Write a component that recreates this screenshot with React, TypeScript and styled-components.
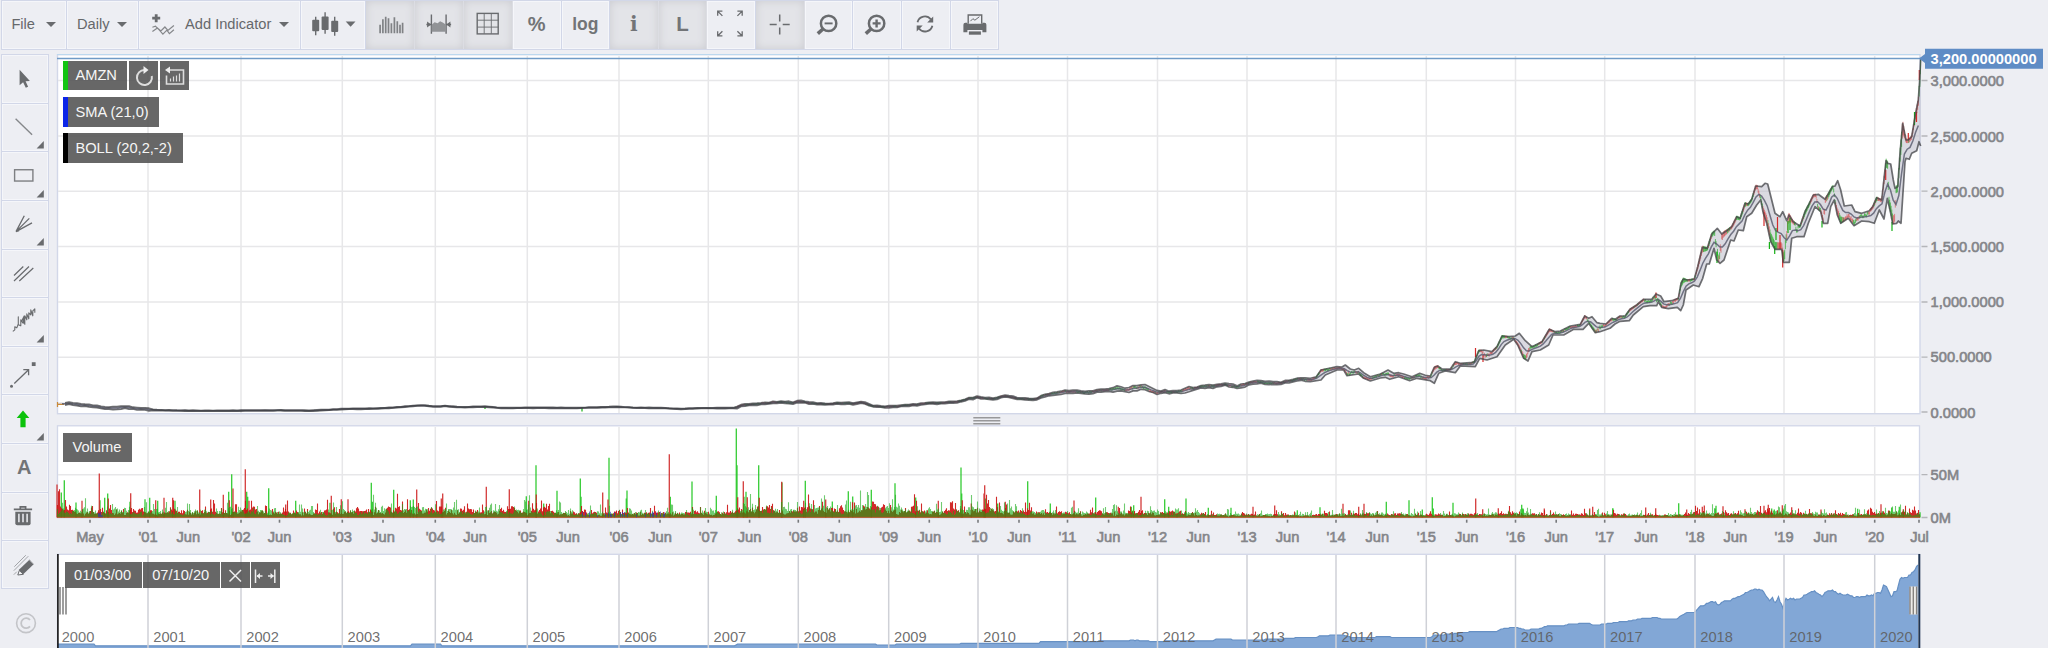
import React from "react";
import styled, { createGlobalStyle, css } from "styled-components";

const ink = "#696b6e";
const line = "#d2d7e8";

const Global = createGlobalStyle`
  * { box-sizing: border-box; }
  body { margin: 0; background: #edeef3; font-family: "Liberation Sans", Arial, sans-serif; font-size: 14.67px; color: #66686b; }
`;

/* ---------- layout ---------- */

const Page = styled.div`
  width: 2048px;
  height: 648px;
  overflow: hidden;
  display: flex;
  flex-direction: column;
  background: #edeef3;
`;
const Toolbar = styled.div`
  display: flex;
  height: 49.5px;
  margin: 0 0 4.5px 0.5px;
  width: 998.5px;
  border: 1px solid ${line};
  border-width: 1px 0 1.5px 1px;
`;
const ToolButton = styled.div<{ $w: number; $on?: boolean }>`
  width: ${(p) => p.$w}px;
  flex: none;
  height: 100%;
  padding-bottom: 1px;
  border-right: 1px solid ${line};
  box-shadow: inset 0 0 0 1px #f5f6fa;
  display: flex;
  align-items: center;
  ${(p) =>
    p.$on &&
    css`
      background: #e3e4e8;
      border-right-color: #dcdde3;
      box-shadow: inset 0 0 8px #cacbd0;
    `}
`;
const MenuLabel = styled.span<{ $x: number }>`
  padding-left: ${(p) => p.$x}px;
  white-space: nowrap;
`;
const Caret = styled.i<{ $gap: number }>`
  margin-left: ${(p) => p.$gap}px;
  border: 5px solid transparent;
  border-top-color: ${ink};
  border-bottom: 0;
`;
const Glyph = styled.span<{ $size: number; $serif?: boolean }>`
  flex: 1;
  text-align: center;
  font-weight: bold;
  font-size: ${(p) => p.$size}px;
  color: #727477;
  ${(p) => p.$serif && css`font-family: "DejaVu Serif", serif;`}
`;
const Icon = styled.svg`
  display: block;
  flex: none;
  overflow: visible;
  fill: none;
  stroke: ${ink};
  stroke-width: 1.4;
`;
const Body = styled.div`
  display: flex;
  flex: 1;
`;
const Sidebar = styled.div`
  width: 57px;
  padding-left: 0.5px;
  display: flex;
  flex-direction: column;
`;
const SideButton = styled.div`
  width: 48.5px;
  height: 48.63px;
  border: 1px solid ${line};
  border-bottom-width: 0;
  box-shadow: inset 0 0 0 1px #f5f6fa;
  display: flex;
  align-items: center;
  justify-content: center;
  padding-right: 1px;
  &:nth-child(11) { border-bottom-width: 1px; }
`;
const Charts = styled.div`
  flex: 1;
  display: flex;
  flex-direction: column;
  position: relative;
`;
const Panel = styled.div`
  position: relative;
  flex: none;
`;
const Plot = styled.svg`
  display: block;
  overflow: visible;
  font-family: "Liberation Sans", Arial, sans-serif;
  font-size: 14.67px;
`;
const Legends = styled.div<{ $top: number }>`
  position: absolute;
  left: 6px;
  top: ${(p) => p.$top}px;
  display: flex;
  flex-direction: column;
  gap: 6.8px;
`;
const LegendRow = styled.div`
  display: flex;
  gap: 1.5px;
`;
const Tag = styled.div<{ $w: number; $h?: number; $bar?: string; $pad?: number }>`
  width: ${(p) => p.$w}px;
  height: ${(p) => p.$h ?? 29.7}px;
  background: rgba(82, 82, 82, 0.88);
  color: #f6f6f6;
  display: flex;
  align-items: center;
  white-space: nowrap;
  padding-left: ${(p) => p.$pad ?? 7.4}px;
  ${(p) => p.$bar && css`border-left: 5px solid ${p.$bar};`}
`;
const RangeTags = styled.div`
  position: absolute;
  left: 8px;
  top: 9px;
  display: flex;
  gap: 1.5px;
`;

/* ---------- data ---------- */

type P = [number, number];
const X0 = 57;

function parse(s: string, ox: number, oy: number): P[] {
  return s.split(" ").map((t) => {
    const [a, b] = t.split(",").map(Number);
    return [ox + a / 3, oy + b / 3] as P;
  });
}
function at(points: P[], x: number) {
  if (x <= points[0][0]) return points[0][1];
  for (let i = 1; i < points.length; i++) {
    const [bx, by] = points[i];
    if (x <= bx) {
      const [ax, ay] = points[i - 1];
      return ay + ((by - ay) * (x - ax)) / (bx - ax || 1);
    }
  }
  return points[points.length - 1][1];
}
function seeded(seed: number) {
  let s = seed;
  return () => {
    s = (s * 1664525 + 1013904223) >>> 0;
    return s / 4294967296;
  };
}

const early: P[] = [
  [57, 404], [64, 403.6], [70, 403.4], [80, 404.6], [95, 406.3], [108, 408.3], [125, 407.3], [140, 408.6], [155, 410.2],
  [180, 410.6], [220, 410.8], [280, 410.3], [310, 410.8], [345, 409], [375, 408.6], [400, 407.2], [415, 405.6],
  [425, 405.6], [435, 406.6], [445, 406], [460, 407.3], [485, 406.6], [500, 408], [535, 407.8], [577, 408], [617, 406.8], [635, 407.8], [660, 408],
  [680, 408.9], [700, 408.2], [735, 408], [741, 406], [750, 404.4], [765, 403.8], [782, 401.5], [790, 402.8], [800, 401.8], [820, 404.2],
  [845, 403.3], [852, 404], [862, 402.6], [872, 405.8], [882, 407], [895, 406.3], [912, 405], [930, 403.2], [960, 402], [965, 399.5],
  [978, 397.3], [995, 398.7], [1005, 396.5], [1022, 398.8], [1037, 399], [1047, 394.8], [1067, 391.8], [1080, 392], [1088, 393],
  [1097, 391], [1109, 390], [1120, 388.4], [1127, 390], [1140, 386.8], [1147, 388], [1157, 392], [1174, 391.7], [1184, 391.3],
  [1189, 389.3], [1197, 387.7], [1212, 386.7], [1224, 384.3], [1239, 386.9], [1252, 382.3], [1267, 382.7], [1280, 383.3],
  [1297, 379.3], [1309, 380.2],
];
const band = (x: number) => (x < 150 ? 1.2 : x < 735 ? 0.4 : x < 1040 ? 0.9 : 1.4);
const wob = (x: number) => (x > 1110 && x < 1160 ? 1 : x > 1184 && x < 1192 ? 1.8 : 0);

const br = seeded(19);
const earlyUpper: P[] = [];
const earlyLower: P[] = [];
for (let x = 57; x < 1309; x += 4) {
  const y = at(early, x);
  const k = band(x) + wob(x);
  const drift = x > 735 ? (br() - 0.5) * 0.9 : 0;
  earlyUpper.push([x, y + drift - k * (0.6 + br() * 0.8)]);
  earlyLower.push([x, y + drift + k * (0.6 + br() * 0.8)]);
}

const upper: P[] = [
  ...earlyUpper,
  ...parse("640,265 658,260 672,240 700,234 720,230 735,231 745,225 760,237 772,240 785,235 800,248 820,260 850,252 862,246 873,240 890,250 905,248 920,252 945,260 968,250 985,256 1000,258 1012,232 1022,228 1035,237 1060,237 1075,215 1090,220 1120,218 1132,215 1145,182 1160,180 1185,185 1200,170 1215,138 1235,140 1255,138 1267,130 1285,152 1305,170 1335,155 1357,118 1375,125 1390,123 1420,108 1450,103 1463,78 1475,85 1485,80 1500,98", 1097, 290),
  ...parse("0,850 18,852 35,835 46,838 60,828 75,828 90,808 110,795 130,778 155,778 168,762 182,768 192,785 215,782 235,775 243,730 250,717 262,720 283,717 293,680 307,622 322,625 335,582 352,565 365,582 383,570 395,560 410,530 420,535 435,490 445,492 455,478 467,438 485,440 495,430 503,432 515,480 525,520 540,530 548,515 560,542 567,525 580,545 600,558 615,515 628,490 640,465 655,463 675,478 685,462 697,440 705,438 713,422 722,450 733,498 755,495 765,515 785,520 808,512 818,500 830,473 845,480 858,362 863,370 872,372 880,420 885,445 893,440 900,340 908,250 918,300 925,300 935,290 945,230 955,180 959,120 962,55", 1600, 40),
];
const lower: P[] = [
  ...earlyLower,
  ...parse("640,275 672,270 685,255 720,240 740,240 750,257 785,252 800,265 820,273 850,264 865,262 878,268 905,260 938,272 960,265 1000,272 1012,280 1025,250 1045,243 1075,248 1090,228 1135,230 1148,205 1170,210 1200,200 1225,165 1250,148 1262,165 1280,205 1293,213 1305,185 1330,180 1355,165 1368,135 1400,135 1430,118 1458,118 1475,100 1495,128", 1097, 290),
  ...parse("0,875 30,865 45,852 60,844 88,842 100,825 130,800 150,797 170,797 175,785 185,802 205,806 232,802 242,812 250,795 258,750 280,735 297,740 308,715 320,672 328,672 342,625 350,660 360,670 372,660 392,600 402,603 415,570 430,572 440,530 455,520 470,495 482,480 490,520 500,550 512,605 525,628 545,628 550,667 568,667 575,595 590,590 612,590 625,550 645,500 662,515 670,550 683,550 692,500 703,480 712,525 722,550 745,535 762,557 785,543 808,545 823,550 838,510 852,537 862,475 872,520 878,552 890,550 895,543 903,550 915,365 918,355 928,358 935,340 950,332 957,305 962,318", 1600, 40),
];

const xs: number[] = [];
for (let x = 62; x <= 1920.6; x += 0.7) xs.push(x);
const toPath = (pts: P[]) => "M" + pts.map(([x, y]) => `${x.toFixed(1)},${y.toFixed(1)}`).join("L");
const upPath = toPath(upper.slice(2));
const loPath = toPath(lower.slice(2));
const bandFill = toPath([...upper, ...[...lower].reverse()]) + "Z";
const smaPath = toPath(
  xs.filter((_, i) => i % 4 === 0).map((x) => {
    let m = 0;
    for (let k = -2; k <= 2; k++) m += at(upper, Math.min(1918, x + k)) + at(lower, Math.min(1918, x + k));
    return [x, m / 10] as P;
  })
);

const rnd = seeded(41);
let greenCandles = "";
let redCandles = "";
for (const x of xs) {
  if (x < 735) continue;
  const u = at(upper, x);
  const l = at(lower, x);
  const slope = at(upper, x + 5) + at(lower, x + 5) - at(upper, x - 5) - at(lower, x - 5);
  const pos = Math.max(0.05, Math.min(0.9, 0.48 + slope / 26 + (rnd() - 0.5) * 0.3));
  const h = 0.5 + (l - u) * 0.09;
  const y = u + (l - u) * pos;
  const seg = `M${x.toFixed(1)},${(y - h).toFixed(1)}V${(y + h).toFixed(1)}`;
  const bullish = Math.sin(x * 0.55) + Math.sin(x * 0.21) + (rnd() - 0.5) * 1.6 > 0;
  if (bullish) greenCandles += seg;
  else redCandles += seg;
}
const wicks: [number, number, number, number][] = [
  [1475.5, 348, 357, 0], [1483, 355, 362, 0], [1656, 292.6, 298, 0], [1782.7, 250, 267.5, 0], [1769.4, 242, 249, 1],
  [1774.7, 246, 254, 1], [1764, 212, 226, 0], [1777.5, 217, 232, 0], [1822, 221, 227.5, 1], [1892, 222, 231, 1],
  [1717, 252, 263, 1], [1908.3, 133, 140, 0], [1914.5, 112, 125, 1], [1916.5, 112, 122, 0], [1885.7, 170, 180, 0],
  [1919.3, 70, 80, 0], [485, 407, 409, 1], [582, 408, 411.5, 1], [1788, 221, 233, 1], [1790, 218, 230, 1], [1776, 228, 240, 1], [1780, 235, 249, 0],
];

const years = [148, 241, 342.3, 435.3, 527.3, 619, 708.3, 798.3, 888.7, 978, 1067.5, 1157.5, 1247, 1336, 1426.3, 1515.5, 1604.7, 1695, 1784, 1874.7];
const junes = [188.3, 279.5, 383, 475, 568, 660, 749.6, 839.3, 929.3, 1019, 1108.6, 1198.3, 1287.5, 1377.3, 1466.7, 1556.2, 1646, 1735.3, 1825.3];
const pad = (n: number) => String(n).padStart(2, "0");

const spikeRows: [number, number, string][] = [
  [57, 397, "r0:298 g13:322 g22:285 g57:352 r75:347 r127:265 g129:345 g143:338 g152:325 r154:340 r221:324 g219:350 g264:342 g278:338 g302:347 r296:345 r321:338 r347:338 g354:347 r428:313 r461:343 r499:329 g515:320 g524:267 r528:310 r517:345 r565:252 g569:320 r576:347 g572:335 g635:309 g716:347 r686:358 r823:332 g819:353 r853:342 r873:342 g943:293 g1010:314 g946:350 r1079:313 g1060:345 g1069:343 r1157:325 r1153:340 r1288:305 r1357:312 g1408:333 r1415:347 g1437:240 r1438:328 g1500:317 g1460:355"],
  [577, 397, "g10:280 g12:335 r77:322 g96:218 r93:343 g150:316 g148:340 r277:207 g280:335 g345:289 g418:332 g478:130 g480:240 r482:336 r499:288 g501:335 g507:320 r511:336 g545:240 r547:338 r614:290 g615:292 g685:287 r680:347 r746:343 g766:349 g814:318 g827:334 g883:314 g954:294 g1016:337 r1084:347 g1152:247 g1154:325 r1156:345 r1183:355 r1223:300 r1221:325 g1225:340 g1262:355 r1285:350 g1352:288 g1420:355 r1491:346 g1556:337"],
  [1097, 682, "r64:650 g110:645 g103:650 r132:620 g203:627 g267:625 g215:650 g240:658 g334:653 g402:653 r468:650 r533:646 g601:660 g669:651 r738:641 r785:650 r801:641 g868:635 g936:630 g1006:621 g1009:655 g976:658 g1068:638 r1136:625 r1157:657 r1204:654 g1274:644 g1278:655 r1342:655 r1478:655 r1487:650 g1548:655"],
  [1600, 352, "g38:324 r137:322 r167:324 g236:309 r260:328 r307:320 r313:316 g348:317 g346:325 r369:318 r435:327 r492:317 r505:314 g515:325 g523:328 r547:315 g549:325 r575:321 r663:328 g773:326 r843:312 g875:322 g898:320 r910:327 g960:336"],
];
const baseVol: P[] = [
  [57, 8], [80, 5.5], [130, 5.5], [190, 4.6], [230, 5.5], [245, 7], [262, 5], [300, 4.6], [340, 5], [380, 6.5], [430, 7],
  [470, 5.5], [530, 6.5], [570, 4], [620, 4], [660, 4.2], [735, 4.5], [745, 9], [780, 5.5], [810, 8], [850, 6.5],
  [868, 10.5], [890, 8], [925, 5.5], [965, 5.5], [985, 8], [1030, 4.5], [1090, 3.8], [1130, 4.5], [1180, 4], [1210, 2.6],
  [1320, 2.2], [1350, 3], [1430, 2.4], [1480, 2.5], [1515, 3.8], [1545, 2.5], [1680, 2.2], [1700, 4], [1730, 2.8], [1770, 5], [1800, 3.3],
  [1850, 2.4], [1885, 4], [1900, 4.5], [1919, 4],
];
const vr = seeded(7);
const V0 = 517.5;
let greenVol = "";
let redVol = "";
let blueVol = "";
for (let x = X0 + 0.5; x < 1920; x += 1) {
  const b = at(baseVol, x) * 1.22;
  const bias = Math.sin(x * 0.17) * 0.5 + Math.sin(x * 0.61) * 0.4;
  const jump = (p: number) => (vr() < p ? 1.5 + vr() * 0.9 : 0.6 + vr() * 0.65);
  redVol += `M${x},${V0}V${(V0 - b * jump(0.12) * (0.9 - bias * 0.5)).toFixed(1)}`;
  greenVol += `M${x},${V0}V${(V0 - b * jump(0.14) * (0.9 + bias * 0.5)).toFixed(1)}`;
  if ((x > 580 && x < 665 && vr() < 0.25) || (x > 98 && x < 103)) blueVol += `M${x},${V0}V${(V0 - 2 - vr() * 4).toFixed(1)}`;
}
let greenSpikes = "";
let redSpikes = "";
for (const [ox, base, row] of spikeRows)
  for (const item of row.split(" ")) {
    const [px, top] = item.slice(1).split(":").map(Number);
    const seg = `M${(ox + px / 3).toFixed(1)},${V0}V${(V0 - (base - top) / 3).toFixed(1)}`;
    if (item[0] === "g") greenSpikes += seg;
    else redSpikes += seg;
  }

const navPoints: P[] = [
  [57, 644], [94, 644], [95, 645.5], [411, 645.5], [412, 644.3], [441, 644.3], [442, 645.5], [480, 645.5], [735, 645.5], [737, 644.3], [875, 644.3],
  [877, 645.4], [895, 645.4], [897, 644.3], [960, 644.3], [962, 643], [1039, 643], [1041, 641.7], [1087, 641.7],
  ...parse("0,1055 8,1053 95,1053 97,1050 112,1050 114,1053 125,1048 127,1052 155,1052 157,1056 200,1056 202,1053 348,1053 350,1049 400,1047 410,1050 440,1050 540,1048 600,1043 660,1042 665,1038 700,1036 740,1036 760,1042 860,1041 940,1042 1003,1043 1010,1035 1060,1033 1075,1030 1130,1025 1200,1024 1220,1015 1260,1012 1285,1020 1330,1016 1350,1008 1400,1008 1412,1003 1450,1001 1475,1000 1490,1005", 1097, 290),
  ...parse("0,674 50,667 90,663 130,655 170,653 185,657 232,657 240,648 260,638 283,637 300,620 330,606 345,606 355,615 370,603 385,604 410,592 430,582 450,575 465,567 487,570 500,590 510,605 515,590 525,610 535,592 550,625 555,597 600,598 615,585 645,572 665,590 675,578 697,568 710,582 740,582 765,592 820,586 830,577 842,580 850,556 857,554 865,575 875,595 883,575 893,570 898,535 925,530 935,520 945,510 957,490", 1600, 400),
];
const jr = seeded(3);
const navLine: P[] = [];
for (let x = 58; x <= 1919; x += 1.5) {
  const y = at(navPoints, x) + (x > 1700 ? (jr() - 0.5) * 1.6 : 0);
  navLine.push([x, Math.round(y * 1.2) / 1.2]);
}

/* ---------- toolbar and sidebar icons ---------- */

const TIcon = ({ x, w = 49, children }: { x: number; w?: number; children: React.ReactNode }) => (
  <Icon width={w - 1} height={46} viewBox={`${x + 0.6} 1.3 ${w - 1} 46`}>{children}</Icon>
);
const SIcon = ({ n, more, children }: { n: number; more?: boolean; children: React.ReactNode }) => {
  const y = 55 + n * 48.63;
  return (
    <Icon width={46} height={47} viewBox={`1.7 ${y} 46 47`}>
      {children}
      {more && <path d={`M37.3 ${y + 44.6}h7.2v-7.5z`} fill={ink} stroke="none" />}
    </Icon>
  );
};
const Magnifier = ({ cx, plus }: { cx: number; plus?: boolean }) => (
  <>
    <circle cx={cx} cy={23.7} r={7.7} strokeWidth={2.5} />
    <path d={`M${cx - 5.6} 29.3l-5.2 4.6`} strokeWidth={3.6} />
    <path d={`M${cx - 4} 23.7h8${plus ? `M${cx} 19.7v8` : ""}`} strokeWidth={plus ? 2.4 : 1.9} />
  </>
);

const tick = (x: number) => <path key={x} d={`M${x} 519.7v3`} stroke="#77797c" strokeWidth={1.6} />;
const axisText = { fill: "#848589", stroke: "#848589", strokeWidth: 0.6 };

export default function App() {
  return (
    <Page>
      <Global />
      <Toolbar>
        <ToolButton $w={65.5}><MenuLabel $x={9.9}>File</MenuLabel><Caret $gap={10.5} /></ToolButton>
        <ToolButton $w={72}><MenuLabel $x={10}>Daily</MenuLabel><Caret $gap={7.5} /></ToolButton>
        <ToolButton $w={162}>
          <TIcon x={139} w={47}>
            <path d="M156.8 14.5v8M152.8 18.5h8" strokeWidth={2.8} />
            <path d="M153 31.8l5-3.5 3.500 3 4-4 3 3.500 6-5M153 27.500l3-1 4 4 3.500 4 4-4 2.500 3.500 4.500-4" stroke="#85878a" strokeWidth={1.2} />
          </TIcon>
          <MenuLabel $x={0}>Add Indicator</MenuLabel><Caret $gap={7.5} />
        </ToolButton>
        <ToolButton $w={65}>
          <TIcon x={301} w={65}>
            <g fill={ink} stroke="none"><rect x="312.8" y="20" width="7" height="11.6" rx="1" /><rect x="322.2" y="16.7" width="7" height="13.6" rx="1" /><rect x="331.8" y="21" width="7" height="11.2" rx="1" /><path d="M346.3 21.8h9.8l-4.9 5.2z" /></g>
            <path d="M316.3 17v18.600M325.7 12.500v21.500M335.3 17v19" />
          </TIcon>
        </ToolButton>
        <ToolButton $w={49} $on>
          <TIcon x={366}><path stroke="#808285" strokeWidth={1.700} d="M380.7 25v8.500M383.5 19.500v14M386.3 17v16.500M389.1 18.500v15M392 23.500v10M395 17.500v16M397.9 21.500v12M400.6 25v8.500M403.2 23v10.500" /></TIcon>
        </ToolButton>
        <ToolButton $w={49} $on>
          <TIcon x={415.3}>
            <path d="M432.3 14.800V34M447 14.800V34" />
            <path d="M432.5 32V25l3-2.500 3 1 2.500-2 3 1.500 3 2V32z" fill="#919396" stroke="none" />
            <path d="M427.3 24.800h5M447 24.800h5" />
            <path d="M432 24.800l-4-3v6zM447.3 24.800l4-3v6z" fill={ink} stroke="none" />
          </TIcon>
        </ToolButton>
        <ToolButton $w={49} $on>
          <TIcon x={464}><rect x="477.8" y="13.7" width="21" height="20.5" /><path strokeWidth=".9" d="M484.8 14v20M491.9 14v20M478 20.500h21M478 27.400h21" /></TIcon>
        </ToolButton>
        <ToolButton $w={48.5}><Glyph $size={20}>%</Glyph></ToolButton>
        <ToolButton $w={48.5}><Glyph $size={17.5}>log</Glyph></ToolButton>
        <ToolButton $w={48.7} $on><Glyph $size={20} $serif>i</Glyph></ToolButton>
        <ToolButton $w={48.7} $on><Glyph $size={20.5}>L</Glyph></ToolButton>
        <ToolButton $w={48.5}>
          <TIcon x={706.5}><path strokeWidth={1.3} d="M717.8 16v-4.500h4.700M718 11.700l4.500 4.500M737.5 11.500h4.800v4.500M742 11.700l-4.500 4.500M717.8 31.500v4.700h4.700M718 36l4.500-4.500M742.3 31.500v4.700h-4.800M742 36l-4.500-4.500" /></TIcon>
        </ToolButton>
        <ToolButton $w={49} $on>
          <TIcon x={755}><path strokeWidth={1.5} d="M779.3 14.700v7M779.3 27.700v7M769.3 24.700h7M782.3 24.700h7" /></TIcon>
        </ToolButton>
        <ToolButton $w={48.5}><TIcon x={804.5}><Magnifier cx={828.7} /></TIcon></ToolButton>
        <ToolButton $w={48.7}><TIcon x={853}><Magnifier cx={877.2} plus /></TIcon></ToolButton>
        <ToolButton $w={48.5}>
          <TIcon x={901.5}>
            <path strokeWidth={1.8} d="M917.6 22.500a7.600 7.600 0 0 1 13.400-2.800M932.5 26a7.600 7.600 0 0 1-13.400 2.800" />
            <path d="M933.3 16.800v6h-6zM916.8 31.700v-6h6z" fill={ink} stroke="none" />
          </TIcon>
        </ToolButton>
        <ToolButton $w={48.9}>
          <TIcon x={950}>
            <path d="M967.8 24v-8.700h13.500V24" /><path d="M970 21.500l2.500-2.500 2 1.500 4.500-3.500" strokeWidth={1} />
            <path d="M965 23h2v1h15v-1h2q2 0 2 2v7.500h-4v-2.300h-15v2.300h-4V25q0-2 2-2z" fill={ink} stroke="none" />
            <path d="M968.5 31.700h12v3.300h-12z" fill={ink} stroke="none" />
          </TIcon>
        </ToolButton>
      </Toolbar>
      <Body>
        <Sidebar>
          <SideButton><SIcon n={0}><path d="M20.3 69.800v15.400l3.500-3 2.700 5.600 2.300-1-2.500-5.500 4.300-.3z" fill={ink} stroke="none" /></SIcon></SideButton>
          <SideButton><SIcon n={1} more><path stroke="#85878a" d="M16.3 118.500l16.500 16" /></SIcon></SideButton>
          <SideButton><SIcon n={2} more><rect x="15.3" y="169" width="18.3" height="11.3" stroke="#7d7f82" /></SIcon></SideButton>
          <SideButton><SIcon n={3} more><path strokeWidth={1.3} d="M16.7 231.500L25 215.700M16.7 231.500L30 218.300M16.7 231.500L32.7 222.700M16.7 231.500l3-1" /></SIcon></SideButton>
          <SideButton><SIcon n={4}><path strokeWidth={1.2} d="M14.7 275l9.300-9M14.7 280.500l15-14.500M20 280.500l14-13" /></SIcon></SideButton>
          <SideButton><SIcon n={5} more><path strokeWidth={1.1} strokeLinejoin="round" d="M13.5 331.500l2-1.500v-3l2 1 1.500-4v-7v8l2.500 1v-6l2 3 1-5v6M25.5 325v-9l2 4v-6l2 5v-6l2 2v-5l2 6v-5l2-2v4M22 322l3-6" /></SIcon></SideButton>
          <SideButton>
            <SIcon n={6}><path strokeWidth={1.3} d="M15 383.300l14-13.500M24 369.500h5.300v5.500" /><g fill={ink} stroke="none"><circle cx="12.2" cy="386" r="1.5" /><rect x="32.5" y="362" width="3.8" height="3.8" /></g></SIcon>
          </SideButton>
          <SideButton><SIcon n={7} more><path d="M23.7 409.800l6.300 7.500h-3.700v9.300h-5.200v-9.300h-3.700z" fill="#0bc20b" stroke="none" /></SIcon></SideButton>
          <SideButton><Glyph $size={20}>A</Glyph></SideButton>
          <SideButton>
            <SIcon n={9}>
              <path d="M14.5 509h18.300M21 508.500v-2h5.300v2" strokeWidth={1.7} />
              <path d="M16 511.500h15.300v11.500q0 2-2 2h-11.300q-2 0-2-2z" fill={ink} stroke="none" />
              <path d="M19.6 513.500v8.500M23.7 513.500v8.500M27.8 513.500v8.500" stroke="#edeef3" strokeWidth={1.5} />
            </SIcon>
          </SideButton>
          <SideButton>
            <SIcon n={10}>
              <path d="M21.5 572.500l11-10.500" strokeWidth={6.2} />
              <path d="M18.5 575.300l1.500-4.500 4 3.800z" fill="#f8f8fa" strokeWidth={1} />
              <path d="M15 567l11.500-11.500M14.5 571l14.500-14.500M14.5 575l3-3" stroke="#a3a5a9" strokeWidth={1} />
              <path d="M30.5 560.500l4 4" stroke="#edeef3" strokeWidth={0.9} />
            </SIcon>
          </SideButton>
          <Icon width={49} height={54} viewBox="0 589 49 54">
            <circle cx="25" cy="623.2" r="9.4" stroke="#c3c4c8" strokeWidth={1.6} />
            <path d="M29 620a5 5 0 1 0 0 6.400" stroke="#c3c4c8" strokeWidth={1.8} />
          </Icon>
        </Sidebar>
        <Charts>
          <Panel>
            <Plot width={1991} height={361} viewBox="57 54 1991 361">
              <rect x="57.5" y="54.7" width="1862.5" height="359" fill="#fff" stroke={line} strokeWidth={1.4} />
              <path d="M57 54.500H1920" stroke="#bcd8ee" strokeWidth={1.2} />
              <path stroke="#e7e7e9" strokeWidth={1.5} d={years.map((x) => `M${x} 56V413`).join("") + [80.5, 136, 191.2, 246.5, 302, 357.2].map((y) => `M58 ${y}H1919`).join("")} />
              <path d={bandFill} fill="#bcbcc8" fillOpacity={0.55} />
              <path d={greenCandles} stroke="#22a822" strokeWidth={1} strokeOpacity={0.65} />
              <path d={redCandles} stroke="#d23a3a" strokeWidth={1} strokeOpacity={0.55} />
              {wicks.map(([x, a, b, g]) => <path key={x} d={`M${x} ${a}V${b}`} stroke={g ? "#16b016" : "#d32a2a"} strokeWidth={1.2} />)}
              <path d="M57.5 402v5M58 404.300h6" stroke="#c98a3a" strokeWidth={1.2} />
              <path d={smaPath} fill="none" stroke="#55586c" strokeWidth={1.5} strokeOpacity={0.8} />
              <path d={upPath} fill="none" stroke="#404246" strokeWidth={1.7} strokeOpacity={0.75} strokeLinejoin="round" />
              <path d={loPath} fill="none" stroke="#404246" strokeWidth={1.7} strokeOpacity={0.75} strokeLinejoin="round" />
              <path d="M57 58.600H1921" stroke="#6f9ac6" strokeWidth={1.5} />
              <path stroke="#b4b5b9" strokeWidth={1.3} d={[80.5, 136, 191.2, 246.5, 302, 357.2, 412].map((y) => `M1921.5 ${y}h6`).join("")} />
              {["3,000", "2,500", "2,000", "1,500", "1,000", "500", "0"].map((t, i) => (
                <text key={t} x={1930.6} y={86.4 + i * 55.2} {...axisText}>{t}.0000</text>
              ))}
              <path d="M1919 58.600l6-4.500v-5.300h118v19.900h-118v-5.600z" fill="#5f8cc5" />
              <text x={1930.6} y={63.9} fill="#fff" fontWeight="bold">3,200.00000000</text>
            </Plot>
            <Legends $top={6.5}>
              <LegendRow>
                <Tag $w={64} $bar="#12c412">AMZN</Tag>
                <Tag $w={29.7} $pad={0}>
                  <Icon width={29.7} height={29.7} viewBox="129 60.5 29.7 29.7"><path d="M144.5 69.500a7.500 7.500 0 1 0 7.300 6" stroke="#ddd" strokeWidth={2} /><path d="M143.5 65.500l5 4-5 4z" fill="#eee" stroke="none" /></Icon>
                </Tag>
                <Tag $w={29} $pad={0}>
                  <Icon width={29} height={29.7} viewBox="160 60.5 29 29.7"><path d="M166.5 75v8.500h17V69.500h-15" stroke="#ddd" strokeWidth={1.6} /><path d="M165 69.500l5-3.500v7z" fill="#eee" stroke="none" /><path d="M170.5 81v-3M173.5 81v-5M176.5 81v-6M179.5 81v-8" stroke="#ddd" strokeWidth={1.2} /></Icon>
                </Tag>
              </LegendRow>
              <Tag $w={96.2} $bar="#0b25e8">SMA (21,0)</Tag>
              <Tag $w={119.6} $bar="#000">BOLL (20,2,-2)</Tag>
            </Legends>
          </Panel>
          <Panel>
            <Plot width={1991} height={10} viewBox="57 415 1991 10">
              <path d="M973.3 417.800h27M973.3 420.800h27M973.3 423.800h27" stroke="#98989a" strokeWidth={1.5} />
            </Plot>
          </Panel>
          <Panel>
            <Plot width={1991} height={128} viewBox="57 425 1991 128">
              <rect x="57.5" y="425.8" width="1862" height="92" fill="#fff" stroke={line} strokeWidth={1.3} />
              <path stroke="#e7e7e9" strokeWidth={1.5} d={years.map((x) => `M${x} 427V517`).join("") + "M58 474.700H1919"} />
              <path d={greenSpikes} stroke="#1fc71f" strokeWidth={1.3} strokeOpacity={0.9} />
              <path d={redSpikes} stroke="#cf2626" strokeWidth={1.3} strokeOpacity={0.9} />
              <path d={redVol} stroke="#cc1212" strokeWidth={1.1} strokeOpacity={0.9} />
              <path d={greenVol} stroke="#12a812" strokeWidth={1.1} strokeOpacity={0.6} />
              <path d={blueVol} stroke="#2d2dbb" strokeWidth={1} strokeOpacity={0.6} />
              <path d="M57 517.300H1920" stroke="#c44a1c" strokeWidth={1} strokeOpacity={0.7} />
              <path stroke="#b4b5b9" strokeWidth={1.3} d="M1921.5 474.700h6M1921.5 517.500h6" />
              <text x={1930.6} y={479.6} {...axisText}>50M</text>
              <text x={1930.6} y={522.8} {...axisText}>0M</text>
              {[90, ...years, ...junes, 1919].map(tick)}
              <g textAnchor="middle" {...axisText}>
                <text x={90} y={541.6}>May</text>
                {years.map((x, i) => <text key={x} x={x} y={541.6}>'{pad(i + 1)}</text>)}
                {junes.map((x) => <text key={x} x={x} y={541.6}>Jun</text>)}
                <text x={1919.5} y={541.6}>Jul</text>
              </g>
            </Plot>
            <Legends $top={7.5}><Tag $w={68.7} $pad={9.5}>Volume</Tag></Legends>
          </Panel>
          <Panel>
            <Plot width={1991} height={95} viewBox="57 553 1991 95">
              <rect x="57.5" y="554.3" width="1862" height="100" fill="#fff" stroke={line} strokeWidth={1.3} />
              <path d={toPath(navLine) + "V648H58Z"} fill="#82a7d6" />
              <path d={toPath(navLine)} fill="none" stroke="#6690c4" strokeWidth={1.2} />
              <path stroke="#cfd1d7" strokeWidth={1.5} d={years.map((x) => `M${x} 555V648`).join("")} />
              <text x={61.7} y={641.8} fill="#666" fillOpacity={0.9}>2000</text>
              {years.map((x, i) => <text key={x} x={x + 5.3} y={641.8} fill="#5e5e60" fillOpacity={0.9}>{2001 + i}</text>)}
              <path d="M57.9 554V648" stroke="#111" strokeWidth={1.6} />
              <path d="M1919.3 554V648" stroke="#203552" strokeWidth={2} />
              <path d="M60 587v27.500M63 587v27.500M66 587v27.500" stroke="#858585" strokeWidth={1.6} />
              <rect x="1909.5" y="586.5" width="8" height="28" fill="#eeece8" />
              <path d="M1910 586.500v28M1913.3 586.500v28M1916.6 586.500v28" stroke="#85827f" strokeWidth={1.4} />
            </Plot>
            <RangeTags>
              <Tag $w={76.7} $h={25.6} $pad={9}>01/03/00</Tag>
              <Tag $w={76.5} $h={25.6} $pad={9}>07/10/20</Tag>
              <Tag $w={28.5} $h={25.6} $pad={0}>
                <Icon width={28.5} height={25.6} viewBox="0 0 28.5 25.6"><path d="M8.500 8l11.500 11.500M20 8L8.500 19.500" stroke="#eee" strokeWidth={1.5} /></Icon>
              </Tag>
              <Tag $w={28.5} $h={25.6} $pad={0}>
                <Icon width={28.5} height={25.6} viewBox="0 0 28.5 25.6"><path d="M4.500 7.500v13.500M23.800 7.500v13.500M6 14h5.500M17 14h5.500" stroke="#eee" strokeWidth={1.5} /><path d="M5.500 14l3.500-3v6zM23 14l-3.500-3v6z" fill="#eee" stroke="none" /></Icon>
              </Tag>
            </RangeTags>
          </Panel>
        </Charts>
      </Body>
    </Page>
  );
}
